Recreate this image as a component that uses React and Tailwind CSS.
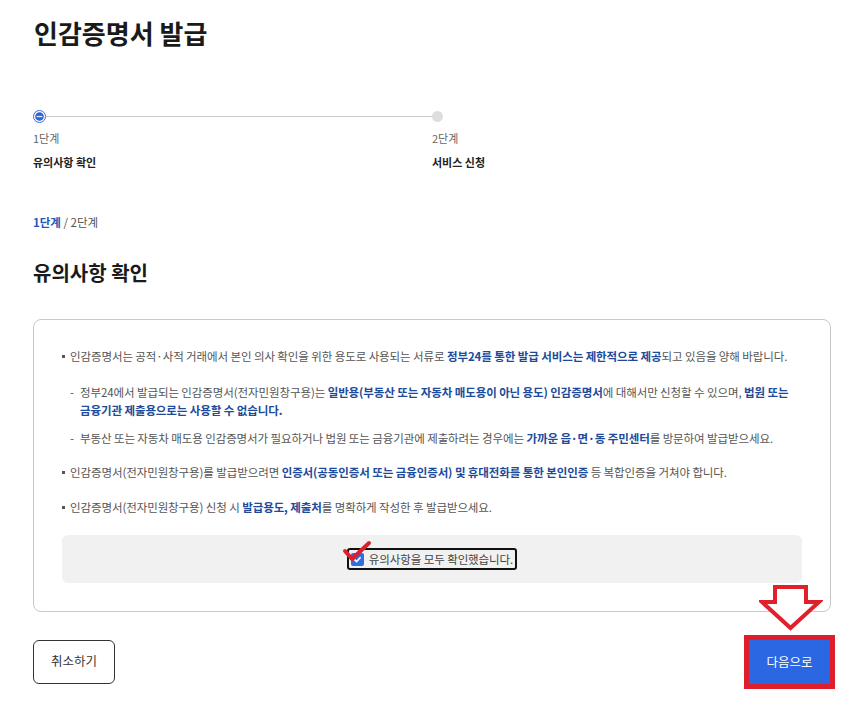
import React from 'react';

const B = ({ children }) => <strong className="font-bold text-[#1d4b9b]">{children}</strong>;

const Stepper = () => {
    const steps = [
        { key: 'notice', num: '1단계', label: '유의사항 확인', active: true },
        { key: 'apply', num: '2단계', label: '서비스 신청', active: false }
    ];

    return (
        <div className="grid grid-cols-2 mt-[59px]">
            {steps.map((step, index) => (
                <div key={step.key}>
                    <div className="flex items-center h-[13px]">
                        {step.active ? (
                            <svg width="13" height="13" viewBox="0 0 13 13" className="shrink-0">
                                <circle cx="6.5" cy="6.5" r="6" fill="#fff" stroke="#3b6fd8" strokeWidth="1" />
                                <circle cx="6.5" cy="6.5" r="4.3" fill="#2f64d4" />
                                <rect x="3.6" y="5.9" width="5.8" height="1.3" fill="#fff" opacity="0.85" />
                            </svg>
                        ) : (
                            <span className="w-[11px] h-[11px] rounded-full bg-[#dedede] shrink-0" />
                        )}
                        {index < steps.length - 1 && <div className="flex-1 h-px bg-[#c8c8c8]" />}
                    </div>
                    <p className="mt-[8px] text-[11px] leading-[14px] text-[#666]">{step.num}</p>
                    <p className="mt-[10px] text-[11px] leading-[14px] font-bold text-[#222]">{step.label}</p>
                </div>
            ))}
        </div>
    );
};

const Bullet = () => (
    <span className="w-[8px] shrink-0 flex items-center h-[18px]">
        <span className="w-[3px] h-[3px] bg-[#555]" />
    </span>
);

const App = () => {
    return (
        <div className="w-[856px] h-[702px] bg-white pl-[33px] pr-[25px] pt-[15px] text-[#333] overflow-hidden" style={{ fontFamily: '"Noto Sans CJK KR", "Noto Sans", sans-serif' }}>
            <h1 className="text-[26px] leading-[36px] font-bold text-[#1a1a1a] pl-px">인감증명서 발급</h1>

            <Stepper />

            <p className="mt-[45px] text-[11.5px] leading-[16px] text-[#555]">
                <span className="font-bold text-[#2557b5]">1단계</span> / 2단계
            </p>

            <h2 className="mt-[29px] text-[20px] leading-[28px] font-bold text-[#1a1a1a]">유의사항 확인</h2>

            {/* 안내 박스 */}
            <div className="mt-[32px] border border-[#c9c9c9] rounded-[8px] px-[28px] pt-[27px] pb-[28px] text-[11.5px] leading-[18px] text-[#555] tracking-[-0.1px] break-keep">
                <div className="flex">
                    <Bullet />
                    <p>인감증명서는 공적·사적 거래에서 본인 의사 확인을 위한 용도로 사용되는 서류로 <B>정부24를 통한 발급 서비스는 제한적으로 제공</B>되고 있음을 양해 바랍니다.</p>
                </div>
                <div className="pl-[8px] mt-[18px] flex">
                    <span className="w-[10px] shrink-0">-</span>
                    <p>정부24에서 발급되는 인감증명서(전자민원창구용)는 <B>일반용(부동산 또는 자동차 매도용이 아닌 용도) 인감증명서</B>에 대해서만 신청할 수 있으며, <B>법원 또는 금융기관 제출용으로는 사용할 수 없습니다.</B></p>
                </div>
                <div className="pl-[8px] mt-[10px] flex">
                    <span className="w-[10px] shrink-0">-</span>
                    <p>부동산 또는 자동차 매도용 인감증명서가 필요하거나 법원 또는 금융기관에 제출하려는 경우에는 <B>가까운 읍·면·동 주민센터</B>를 방문하여 발급받으세요.</p>
                </div>
                <div className="mt-[16px] flex">
                    <Bullet />
                    <p>인감증명서(전자민원창구용)를 발급받으려면 <B>인증서(공동인증서 또는 금융인증서) 및 휴대전화를 통한 본인인증</B> 등 복합인증을 거쳐야 합니다.</p>
                </div>
                <div className="mt-[17px] flex">
                    <Bullet />
                    <p>인감증명서(전자민원창구용) 신청 시 <B>발급용도, 제출처</B>를 명확하게 작성한 후 발급받으세요.</p>
                </div>

                <div className="mt-[19px] h-[48px] bg-[#f1f1f1] rounded-[6px] flex items-center justify-center">
                    <label className="relative flex items-center gap-[5px] border-2 border-[#111] rounded-[3px] pl-[2px] pr-[2px] h-[22px] text-[11.5px] text-[#444]">
                        <span className="w-[13px] h-[13px] rounded-[2px] bg-[#2f6fe0] flex items-center justify-center">
                            <svg width="9" height="9" viewBox="0 0 9 9">
                                <path d="M1.5 4.6 L3.6 6.6 L7.6 2.2" fill="none" stroke="#fff" strokeWidth="1.6" />
                            </svg>
                        </span>
                        유의사항을 모두 확인했습니다.
                        <svg className="absolute left-[-7px] top-[-10px]" width="32" height="24" viewBox="0 0 32 24">
                            <path d="M3 11 L10 19 L27 3" fill="none" stroke="#d9222e" strokeWidth="4" strokeLinecap="round" strokeLinejoin="round" />
                        </svg>
                    </label>
                </div>
            </div>

            <div className="mt-[23px] flex items-center justify-between">
                <button className="-mt-[1px] w-[82px] h-[44px] border border-[#333] rounded-[6px] text-[12.5px] text-[#333] bg-white">취소하기</button>
                <div className="relative -mr-[4px]">
                    <svg className="absolute left-[15px] top-[-51px]" width="64" height="48" viewBox="0 0 64 48">
                        <path d="M16 3 L47 3 L47 18 L60 18 L31.5 44 L3 18 L16 18 Z" fill="#fff" stroke="#e0202a" strokeWidth="4" strokeLinejoin="miter" />
                    </svg>
                    <div className="border-[5px] border-[#de1f2b]">
                        <button className="w-[81px] h-[44px] bg-[#2b66e3] text-white text-[12.5px]">다음으로</button>
                    </div>
                </div>
            </div>
        </div>
    );
};

export default App;
